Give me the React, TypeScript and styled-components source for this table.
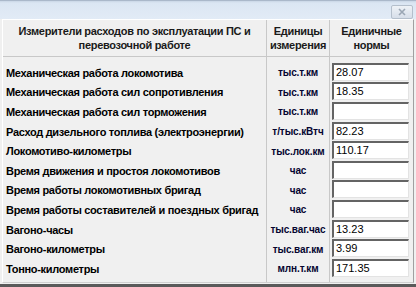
import React from "react";
import styled, { createGlobalStyle } from "styled-components";

const Global = createGlobalStyle`
  html, body { margin: 0; padding: 0; }
  body { width: 416px; height: 287px; overflow: hidden; background: #f0f0f0; font-family: "Liberation Sans", Arial, sans-serif; }
`;

const Window = styled.div`
  width: 416px;
  height: 287px;
  display: flex;
  flex-direction: column;
  background: #f0f0f0;
  box-sizing: border-box;
  border-bottom: 3px solid #5a5a5a;
`;

const TitleBar = styled.div`
  height: 19px;
  flex: none;
  display: flex;
  justify-content: flex-end;
  align-items: flex-start;
  padding: 4px 3px 0 0;
  box-sizing: border-box;
  background: linear-gradient(#c9d6e6 0px, #dbe6f3 2px, #e2ebf6 100%);
  border-top: 1px solid #aab8ca;
`;

const CloseButton = styled.div`
  width: 22px;
  height: 14px;
  box-sizing: border-box;
  border: 1px solid #b4bfcc;
  border-radius: 2px;
  background: linear-gradient(#eef2f7, #d6dee9);
  display: flex;
  align-items: center;
  justify-content: center;
`;

const Panel = styled.div`
  flex: 1;
  margin: 0 2px 1px 2px;
  border-top: 1px solid #ffffff;
  border-left: 1px solid #ffffff;
  border-right: 1px solid #a0a0a0;
  border-bottom: 1px solid #d0d0d0;
  display: grid;
  grid-template-columns: 264px 63px 1fr;
  grid-template-rows: 37px 1fr;
`;

const HeaderCell = styled.div<{ $last?: boolean }>`
  display: flex;
  align-items: center;
  justify-content: center;
  text-align: center;
  font-size: 11px;
  font-weight: bold;
  letter-spacing: -0.3px;
  line-height: 14px;
  color: #1a1a1a;
  border-bottom: 1px solid #c8c8c8;
  border-right: ${(p) => (p.$last ? "none" : "1px solid #c8c8c8")};
  padding-bottom: 1px;
`;

const Column = styled.div<{ $divider?: boolean; $align: string }>`
  display: grid;
  grid-auto-rows: 19.6px;
  padding-top: 5px;
  align-items: center;
  justify-items: ${(p) => p.$align};
  border-right: ${(p) => (p.$divider ? "1px solid #c8c8c8" : "none")};
`;

const Label = styled.div`
  font-size: 11px;
  font-weight: bold;
  letter-spacing: -0.3px;
  color: #000000;
  padding-left: 3px;
  padding-top: 2px;
  white-space: nowrap;
`;

const Unit = styled.div`
  font-size: 10px;
  font-weight: bold;
  color: #050530;
  padding-top: 2px;
  white-space: nowrap;
  letter-spacing: -0.1px;
`;

const Field = styled.div`
  width: 77px;
  height: 18px;
  margin-left: 2px;
  box-sizing: border-box;
  background: #ffffff;
  border-top: 2px solid #646464;
  border-left: 2px solid #646464;
  border-right: 1px solid #e3e3e3;
  border-bottom: 1px solid #e3e3e3;
  font-size: 11px;
  color: #000;
  padding-left: 2px;
  line-height: 14px;
`;

const rows: [string, string, string][] = [
  ["Механическая работа локомотива", "тыс.т.км", "28.07"],
  ["Механическая работа сил сопротивления", "тыс.т.км", "18.35"],
  ["Механическая работа сил торможения", "тыс.т.км", ""],
  ["Расход дизельного топлива (электроэнергии)", "т/тыс.кВтч", "82.23"],
  ["Локомотиво-километры", "тыс.лок.км", "110.17"],
  ["Время движения и простоя локомотивов", "час", ""],
  ["Время работы локомотивных бригад", "час", ""],
  ["Время работы составителей и поездных бригад", "час", ""],
  ["Вагоно-часы", "тыс.ваг.час", "13.23"],
  ["Вагоно-километры", "тыс.ваг.км", "3.99"],
  ["Тонно-километры", "млн.т.км", "171.35"],
];

export default function App() {
  return (
    <>
      <Global />
      <Window>
        <TitleBar>
          <CloseButton>
            <svg width="10" height="8" viewBox="0 0 10 8">
              <path d="M2 1 L8 7 M8 1 L2 7" stroke="#9aa6b4" strokeWidth="1.6" />
            </svg>
          </CloseButton>
        </TitleBar>
        <Panel>
          <HeaderCell>
            Измерители расходов по эксплуатации ПС и
            <br />
            перевозочной работе
          </HeaderCell>
          <HeaderCell>
            Единицы
            <br />
            измерения
          </HeaderCell>
          <HeaderCell $last>
            Единичные
            <br />
            нормы
          </HeaderCell>
          <Column $divider $align="start">
            {rows.map((r) => (
              <Label key={r[0]}>{r[0]}</Label>
            ))}
          </Column>
          <Column $divider $align="center">
            {rows.map((r, i) => (
              <Unit key={i}>{r[1]}</Unit>
            ))}
          </Column>
          <Column $align="start">
            {rows.map((r, i) => (
              <Field key={i}>{r[2]}</Field>
            ))}
          </Column>
        </Panel>
      </Window>
    </>
  );
}
